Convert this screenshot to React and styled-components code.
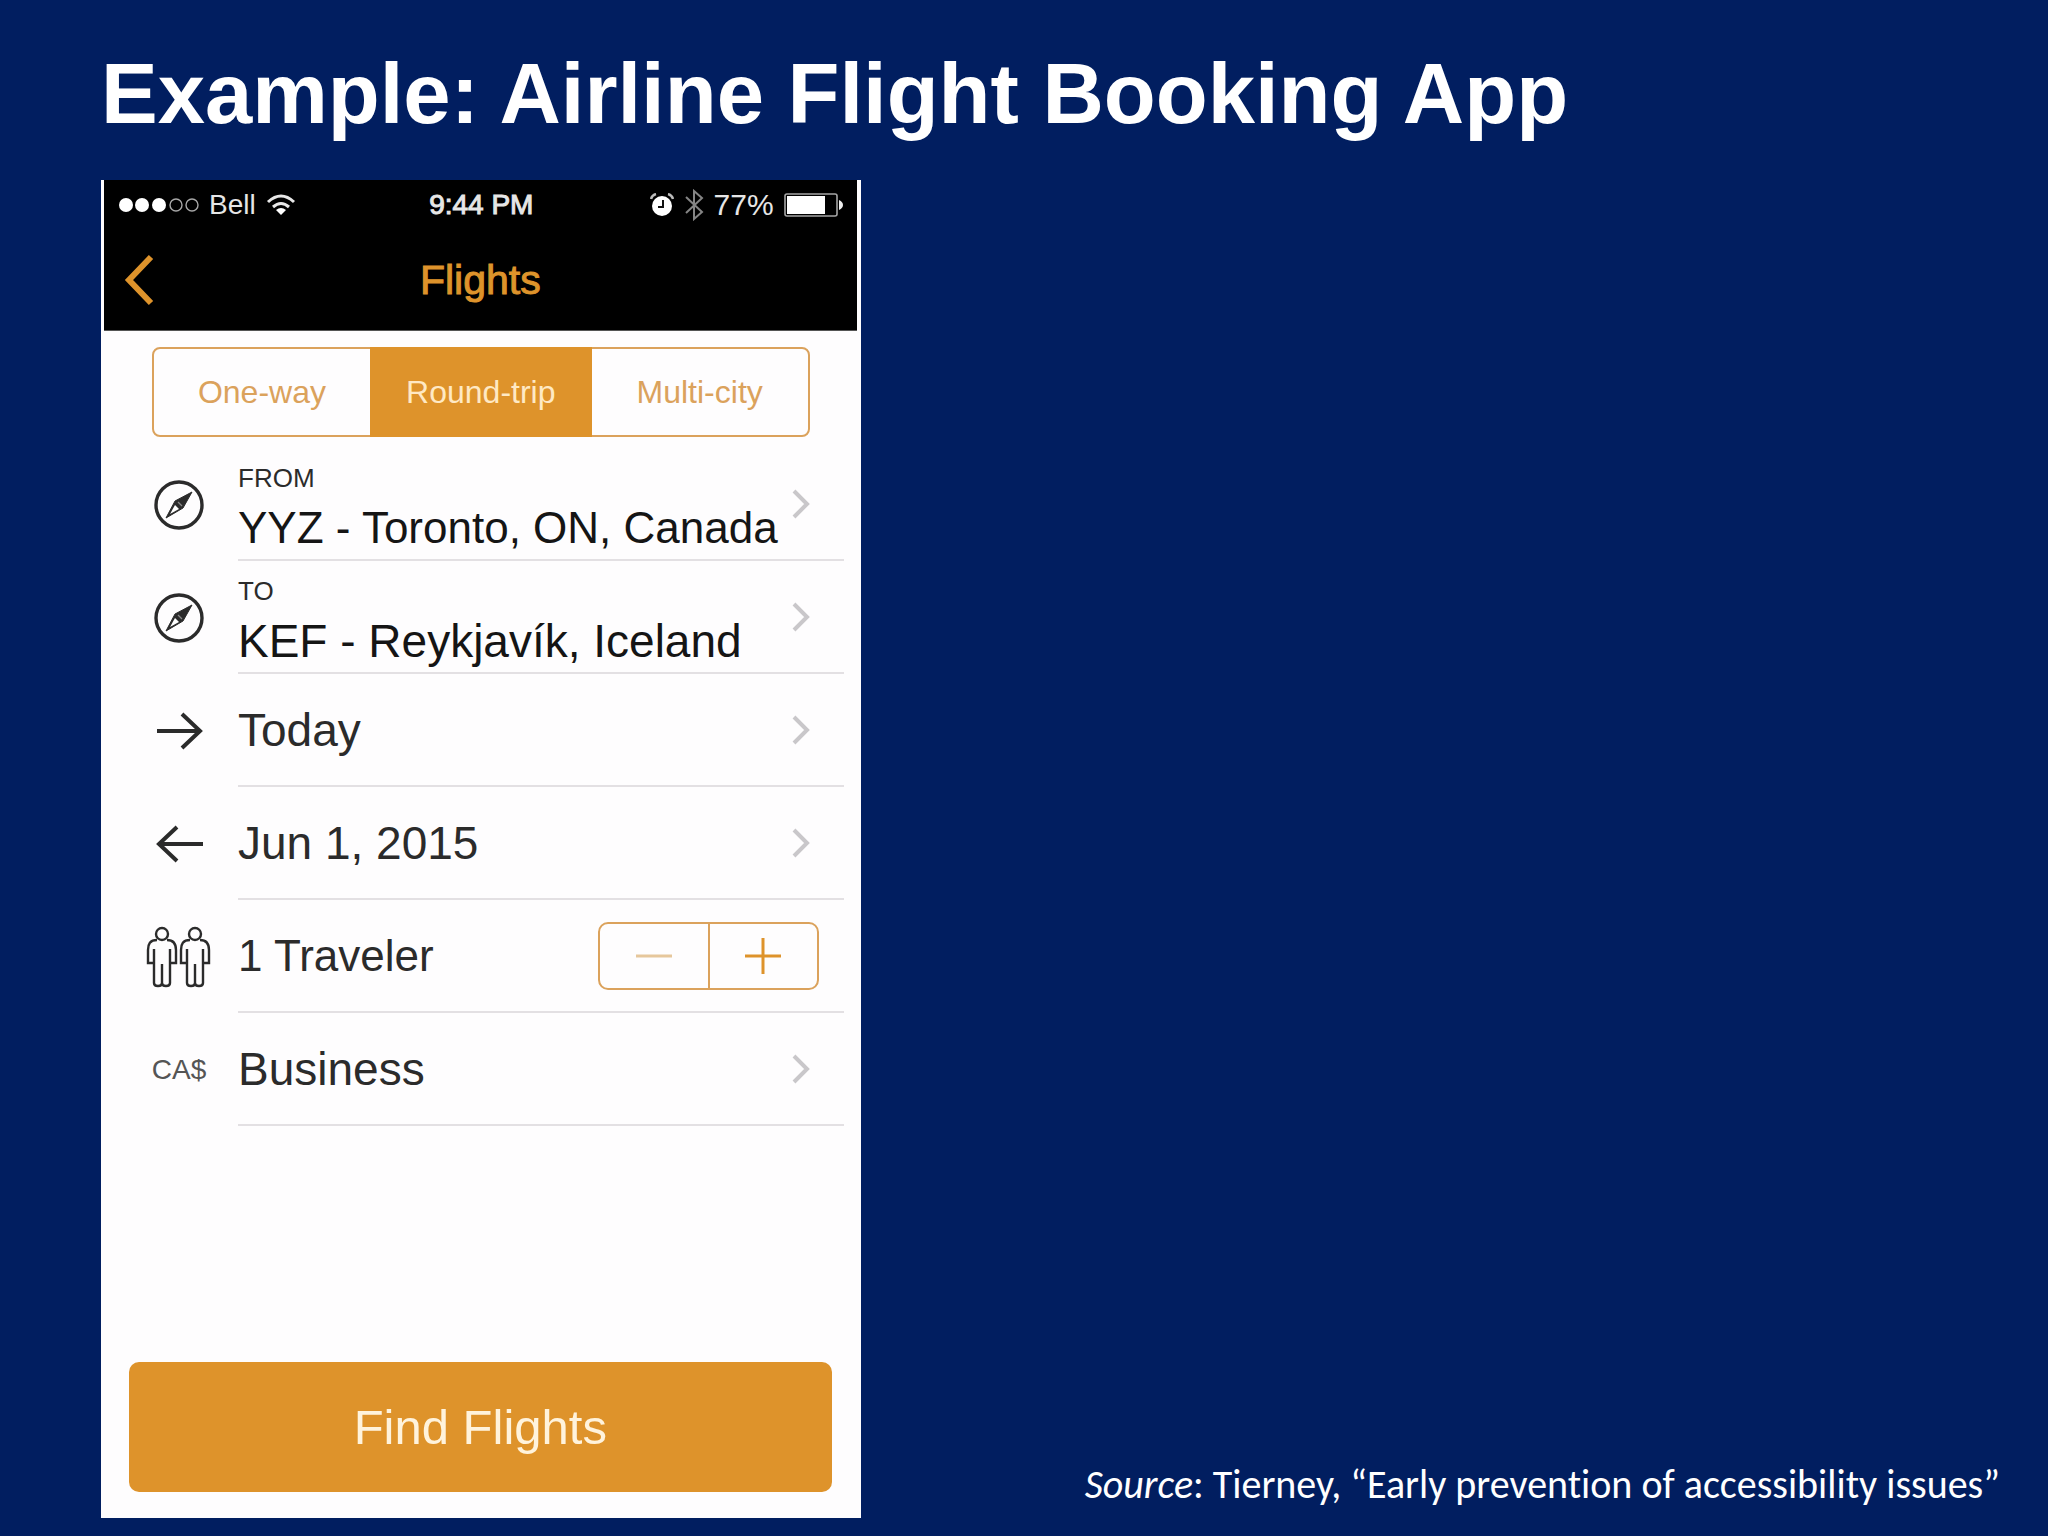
import React, {useState} from 'react';
import styled, {createGlobalStyle} from 'styled-components';

const colors = {
    navy: '#011e60',
    orange: '#de932b',
    orangeSoft: '#dba25c',
    ink: '#2b2b2b',
    line: '#e3e0e3',
    chevron: '#c9c7ca',
};

const App = () => {
    const [trip, setTrip] = useState('Round-trip');
    const [travelers, setTravelers] = useState(1);

    return (
        <Slide>
            <GlobalStyle />
            <SlideTitle>Example: Airline Flight Booking App</SlideTitle>
            <Columns>
                <Phone>
                    <TopBar>
                        <StatusBar>
                            <StatusGroup>
                                <SignalIcon />
                                <span>Bell</span>
                                <WifiIcon />
                            </StatusGroup>
                            <Clock>9:44 PM</Clock>
                            <StatusGroup $end>
                                <AlarmIcon />
                                <BluetoothIcon />
                                <Percent>77%</Percent>
                                <BatteryIcon />
                            </StatusGroup>
                        </StatusBar>
                        <NavBar>
                            <BackButton type="button" aria-label="Back">
                                <svg width="32" height="52" viewBox="0 0 32 52" fill="none" stroke="currentColor" strokeWidth="6">
                                    <path d="M29 3 L7 26 L29 49" />
                                </svg>
                            </BackButton>
                            <NavTitle>Flights</NavTitle>
                        </NavBar>
                    </TopBar>
                    <Tabs>
                        {tripTypes.map(name =>
                            <Tab key={name} type="button" $active={name === trip} aria-pressed={name === trip} onClick={() => setTrip(name)}>
                                {name}
                            </Tab>
                        )}
                    </Tabs>
                    <Rows>
                        <Row>
                            <IconCell><CompassIcon /></IconCell>
                            <RowButton type="button">
                                <Place>
                                    <PlaceLabel>FROM</PlaceLabel>
                                    <Value $dark $compact>YYZ - Toronto, ON, Canada</Value>
                                </Place>
                                <Chevron />
                            </RowButton>
                        </Row>
                        <Row>
                            <IconCell><CompassIcon /></IconCell>
                            <RowButton type="button">
                                <Place>
                                    <PlaceLabel>TO</PlaceLabel>
                                    <Value $dark>KEF - Reykjavík, Iceland</Value>
                                </Place>
                                <Chevron />
                            </RowButton>
                        </Row>
                        <Row>
                            <IconCell><ArrowIcon d="M3 19 H45 M28 2 L46 19 L28 36" /></IconCell>
                            <RowButton type="button">
                                <Value>Today</Value>
                                <Chevron />
                            </RowButton>
                        </Row>
                        <Row>
                            <IconCell><ArrowIcon d="M49 19 H6 M23 2 L5 19 L23 36" /></IconCell>
                            <RowButton type="button">
                                <Value>Jun 1, 2015</Value>
                                <Chevron />
                            </RowButton>
                        </Row>
                        <Row>
                            <IconCell><PeopleIcon /></IconCell>
                            <RowBody>
                                <Value $compact>{travelers} {travelers === 1 ? 'Traveler' : 'Travelers'}</Value>
                                <Stepper>
                                    <StepButton type="button" aria-label="Remove traveler" $dim={travelers === 1} onClick={() => setTravelers(Math.max(1, travelers - 1))}>
                                        <StepIcon d="M1 19 H37" />
                                    </StepButton>
                                    <StepButton type="button" aria-label="Add traveler" onClick={() => setTravelers(travelers + 1)}>
                                        <StepIcon d="M1 19 H37 M19 1 V37" />
                                    </StepButton>
                                </Stepper>
                            </RowBody>
                        </Row>
                        <Row>
                            <IconCell>CA$</IconCell>
                            <RowButton type="button">
                                <Value>Business</Value>
                                <Chevron />
                            </RowButton>
                        </Row>
                    </Rows>
                    <FindButton type="button">Find Flights</FindButton>
                </Phone>
                <Source><em>Source</em>: Tierney, “Early prevention of accessibility issues”</Source>
            </Columns>
        </Slide>
    )
}
export default App;

const tripTypes = ['One-way', 'Round-trip', 'Multi-city'];

const SignalIcon = () => (
    <svg width="80" height="16" viewBox="0 0 80 16">
        {[7, 23, 40].map(x => <circle key={x} cx={x} cy="8" r="7" fill="#fff" />)}
        {[57, 73].map(x => <circle key={x} cx={x} cy="8" r="6" fill="none" stroke="#a8a8a8" strokeWidth="1.4" />)}
    </svg>
);

const WifiIcon = () => (
    <svg width="30" height="22" viewBox="0 0 30 22" fill="none" stroke="#e8e8e8" strokeWidth="3">
        <path d="M2 8 Q15 -4 28 8" />
        <path d="M7 13 Q15 6 23 13" />
        <path d="M15 21 L10 16 Q15 12 20 16 Z" fill="#fff" stroke="none" />
    </svg>
);

const AlarmIcon = () => (
    <svg width="24" height="24" viewBox="0 0 24 24" fill="none">
        <circle cx="12" cy="13" r="10" fill="#fff" />
        <path d="M1 6 Q2 2 6 1 M23 6 Q22 2 18 1" stroke="#bbb" strokeWidth="2.4" />
        <path d="M13 7 V14 H8" stroke="#111" strokeWidth="2" />
    </svg>
);

const BluetoothIcon = () => (
    <svg width="20" height="32" viewBox="0 0 20 32" fill="none" stroke="#858585" strokeWidth="2">
        <path d="M2 8 L18 23 L10 30 V2 L18 9 L2 24" />
    </svg>
);

const BatteryIcon = () => (
    <svg width="60" height="24" viewBox="0 0 60 24">
        <rect x="1" y="1" width="52" height="22" rx="2" fill="none" stroke="#a5a5a5" strokeWidth="1.6" />
        <rect x="3" y="3" width="38" height="18" fill="#fff" />
        <path d="M55 7 Q59 9 59 12 Q59 15 55 17 Z" fill="#eee" />
    </svg>
);

const CompassIcon = () => (
    <svg width="50" height="50" viewBox="0 0 50 50" fill="none" stroke={colors.ink}>
        <circle cx="25" cy="25" r="23" strokeWidth="3.4" />
        <path d="M38 12 L29 28 L12 38 L21 21 Z" fill={colors.ink} strokeWidth="1" />
        <path d="M21 25 L25 29 L16 34 Z" fill="#fff" stroke="none" />
        <path d="M24 22 L28 26" stroke="#888" strokeWidth="1.2" />
    </svg>
);

const ArrowIcon = ({d}) => (
    <svg width="50" height="38" viewBox="0 0 50 38" fill="none" stroke={colors.ink} strokeWidth="4">
        <path d={d} />
    </svg>
);

const person = 'M11 14 C4 14 2 18 2 24 V37 H8 V57 Q8 60 12 60 Q16 60 16 57 Q16 60 20 60 Q24 60 24 57 V37 H30 V24 C30 18 28 14 21 14 M8 37 V23 M24 37 V23 M16 38 V57';

const PeopleIcon = () => (
    <svg width="66" height="62" viewBox="0 0 66 62" fill="none" stroke={colors.ink} strokeWidth="2.4">
        <circle cx="16" cy="8" r="6" />
        <path d={person} />
        <g transform="translate(33 0)">
            <circle cx="16" cy="8" r="6" />
            <path d={person} />
        </g>
    </svg>
);

const Chevron = () => (
    <svg width="18" height="30" viewBox="0 0 18 30" fill="none" stroke={colors.chevron} strokeWidth="4">
        <path d="M2 2 L15 15 L2 28" />
    </svg>
);

const StepIcon = ({d}) => (
    <svg width="38" height="38" viewBox="0 0 38 38" fill="none" stroke="currentColor" strokeWidth="3">
        <path d={d} />
    </svg>
);

const GlobalStyle = createGlobalStyle`
    * {
        box-sizing: border-box;
    }
    body {
        background: ${colors.navy};
        font-family: 'Liberation Sans', Arial, sans-serif;
        margin: 0;
    }
    button {
        background: none;
        border: 0;
        color: inherit;
        cursor: pointer;
        font-family: inherit;
        padding: 0;
    }
    svg {
        display: block;
        flex-shrink: 0;
    }
`;
const Slide = styled.div`
    display: flex;
    flex-direction: column;
    min-height: 100vh;
    padding: 46px 48px 18px 101px;
`;
const SlideTitle = styled.h1`
    color: #fff;
    font-size: 85px;
    line-height: 96px;
    margin: 0 0 38px;
`;
const Columns = styled.main`
    display: grid;
    flex: 1;
    grid-template-columns: 2fr 3fr;
`;
const Phone = styled.section`
    background: #fefdfe;
    display: flex;
    flex-direction: column;
`;
const TopBar = styled.header`
    background: #000;
    border-bottom: 1px solid #555;
    margin: 0 4px 0 3px;
`;
const StatusBar = styled.div`
    align-items: center;
    color: #e6e6e6;
    display: grid;
    font-size: 28px;
    grid-template-columns: 1fr auto 1fr;
    height: 50px;
    padding: 0 13px 0 15px;
`;
const StatusGroup = styled.div`
    align-items: center;
    display: flex;
    gap: 10px;
    justify-content: ${props => props.$end ? 'flex-end' : 'flex-start'};
`;
const Clock = styled.span`
    -webkit-text-stroke: 1px currentColor;
`;
const Percent = styled.span`
    font-size: 30px;
`;
const NavBar = styled.div`
    align-items: center;
    color: ${colors.orange};
    display: grid;
    grid-template-columns: 1fr auto 1fr;
    height: 100px;
    padding: 0 18px;
`;
const BackButton = styled.button`
    justify-self: start;
`;
const NavTitle = styled.h2`
    -webkit-text-stroke: 1px currentColor;
    font-size: 41px;
    font-weight: normal;
    line-height: 48px;
    margin: 0;
`;
const Tabs = styled.div`
    border: 2px solid ${colors.orangeSoft};
    border-radius: 8px;
    display: grid;
    grid-template-columns: 36fr 37fr 36fr;
    height: 90px;
    margin: 16px 51px 11px;
`;
const Tab = styled.button`
    && {
        background: ${props => props.$active ? colors.orange : 'transparent'};
        color: ${props => props.$active ? '#ffe9c4' : colors.orangeSoft};
        font-size: 32px;
        margin: ${props => props.$active ? '-2px 0' : '0'};
    }
`;
const Rows = styled.ul`
    list-style: none;
    margin: 0;
    padding: 0 17px 0 42px;
`;
const Row = styled.li`
    align-items: center;
    column-gap: 23px;
    display: grid;
    grid-template-columns: 72px 1fr;
`;
const IconCell = styled.div`
    color: #555;
    display: flex;
    font-size: 28px;
    justify-content: center;
`;
const RowBody = styled.div`
    align-items: center;
    border-bottom: 2px solid ${colors.line};
    color: ${colors.ink};
    display: flex;
    height: 113px;
    justify-content: space-between;
    padding-right: 25px;
`;
const RowButton = styled(RowBody).attrs({as: 'button'})`
    && {
        border-bottom: 2px solid ${colors.line};
        color: ${colors.ink};
        padding-right: 34px;
        text-align: left;
    }
`;
const Place = styled.span`
    display: flex;
    flex-direction: column;
    gap: 12px;
    padding-top: 9px;
    white-space: nowrap;
`;
const PlaceLabel = styled.span`
    font-size: 26px;
    line-height: 28px;
`;
const Value = styled.span`
    color: ${props => props.$dark ? '#151515' : colors.ink};
    font-size: ${props => props.$compact ? '44px' : '46px'};
    line-height: 48px;
`;
const Stepper = styled.div`
    border: 2px solid ${colors.orangeSoft};
    border-radius: 10px;
    display: grid;
    grid-template-columns: 1fr 1fr;
    height: 68px;
    width: 221px;
`;
const StepButton = styled.button`
    && {
        align-items: center;
        color: ${props => props.$dim ? '#e6c79c' : colors.orange};
        display: flex;
        justify-content: center;
    }
    & + & {
        border-left: 2px solid ${colors.orangeSoft};
    }
`;
const FindButton = styled.button`
    && {
        background: ${colors.orange};
        border-radius: 10px;
        color: #fff3dc;
        font-size: 49px;
        height: 130px;
        margin: auto 29px 26px 28px;
    }
`;
const Source = styled.p`
    align-self: end;
    color: #fff;
    font-family: Carlito, Calibri, Lato, sans-serif;
    font-size: 40px;
    font-variant-ligatures: none;
    line-height: 44px;
    margin: 0 0 11px;
    text-align: right;
`;
